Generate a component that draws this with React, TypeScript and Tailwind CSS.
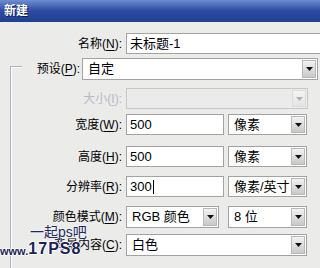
import React from "react";

function Arrow({ disabled = false }: { disabled?: boolean }) {
  return (
    <span
      className={`m-[1px] flex w-[14px] shrink-0 items-center justify-center border ${
        disabled
          ? "border-[#dcdcdc] bg-gradient-to-b from-[#f4f4f4] to-[#e4e4e4]"
          : "border-[#b9b9b9] bg-gradient-to-b from-[#f3f3f3] to-[#c9c9c9]"
      }`}
    >
      <svg width="7" height="4" viewBox="0 0 7 4">
        <path d="M0 0h7L3.5 4z" fill={disabled ? "#b0b0b0" : "#111"} />
      </svg>
    </span>
  );
}

function Select({ value, w, disabled = false }: { value?: string; w: string; disabled?: boolean }) {
  return (
    <div
      className={`flex h-full ${w} border ${
        disabled ? "border-[#c8c8c8] bg-[#ebebeb]" : "border-[#a3a3a3] bg-white"
      }`}
    >
      <span className="flex min-w-0 flex-1 items-center overflow-hidden whitespace-nowrap pl-[5px] text-[13px] text-black">
        {value}
      </span>
      <Arrow disabled={disabled} />
    </div>
  );
}

function Input({ value, w, cursor = false }: { value: string; w: string; cursor?: boolean }) {
  return (
    <div className={`flex h-full ${w} items-center border border-[#a3a3a3] bg-white pl-[3px] text-[13px] text-black`}>
      {value}
      {cursor && <span className="ml-[1px] h-[14px] w-px bg-black" />}
    </div>
  );
}

function Label({ text, key_, disabled = false, w = "w-[122px]" }: { text: string; key_: string; disabled?: boolean; w?: string }) {
  return (
    <span className={`${w} shrink-0 text-right text-[12px] ${disabled ? "text-[#b8b8c8]" : "text-black"}`}>
      {text}(<u className="underline-offset-2">{key_}</u>):
    </span>
  );
}

export default function App() {
  return (
    <div className="relative h-[268px] w-[320px] overflow-hidden bg-[#ebebea] font-['Liberation_Sans','Noto_Sans_CJK_SC',sans-serif]">
      {/* title bar */}
      <div className="flex h-[22px] items-center bg-gradient-to-b from-[#6f8dd2] via-[#2c4aa0] to-[#213f92] pl-[4px] text-[12px] font-bold text-white [text-shadow:1px_1px_0_#0c1f5c]">
        新建
      </div>

      {/* group bracket */}
      <div className="absolute bottom-0 left-[10px] top-[66px] w-[12px] border-l border-t border-[#aeb0c6] shadow-[inset_1px_1px_0_#fff]" />

      <div className="mt-[11px] flex h-[21px] items-center">
        <Label text="名称" key_="N" />
        <div className="ml-[4px] h-full">
          <Input value="未标题-1" w="w-[210px]" />
        </div>
      </div>

      <div className="mt-[4px] flex h-[22px] items-center">
        <Label text="预设" key_="P" w="w-[80px]" />
        <div className="ml-[2px] h-full">
          <Select value="自定" w="w-[236px]" />
        </div>
      </div>

      <div className="mt-[8px] flex h-[21px] items-center">
        <Label text="大小" key_="I" disabled />
        <div className="ml-[4px] h-full">
          <Select w="w-[182px]" disabled />
        </div>
      </div>

      <div className="mt-[5px] flex h-[21px] items-center">
        <Label text="宽度" key_="W" />
        <div className="ml-[4px] flex h-full gap-[4px]">
          <Input value="500" w="w-[98px]" />
          <Select value="像素" w="w-[79px]" />
        </div>
      </div>

      <div className="mt-[11px] flex h-[21px] items-center">
        <Label text="高度" key_="H" />
        <div className="ml-[4px] flex h-full gap-[4px]">
          <Input value="500" w="w-[98px]" />
          <Select value="像素" w="w-[79px]" />
        </div>
      </div>

      <div className="mt-[9px] flex h-[21px] items-center">
        <Label text="分辨率" key_="R" />
        <div className="ml-[4px] flex h-full gap-[4px]">
          <Input value="300" w="w-[98px]" cursor />
          <Select value="像素/英寸" w="w-[79px]" />
        </div>
      </div>

      <div className="mt-[9px] flex h-[22px] items-center">
        <Label text="颜色模式" key_="M" />
        <div className="ml-[4px] flex h-full gap-[9px]">
          <Select value="RGB 颜色" w="w-[93px]" />
          <Select value="8 位" w="w-[79px]" />
        </div>
      </div>

      <div className="mt-[6px] flex h-[22px] items-center">
        <Label text="背景内容" key_="C" />
        <div className="ml-[4px] h-full">
          <Select value="白色" w="w-[181px]" />
        </div>
      </div>

      {/* watermark */}
      <div className="absolute left-[30px] top-[225px] text-[14px] leading-none text-[#1f2a5e] [text-shadow:0_0_2px_#fff]">
        一起ps吧
      </div>
      <div className="absolute left-[0px] top-[241px] flex items-end leading-none text-[#1a2258] [text-shadow:1px_0_0_#fff,-1px_0_0_#fff,0_1px_0_#fff,0_-1px_0_#fff]">
        <span className="text-[11px] font-bold">www.</span>
        <span className="text-[16px] font-black tracking-[1px]">17PS8</span>
      </div>
    </div>
  );
}
